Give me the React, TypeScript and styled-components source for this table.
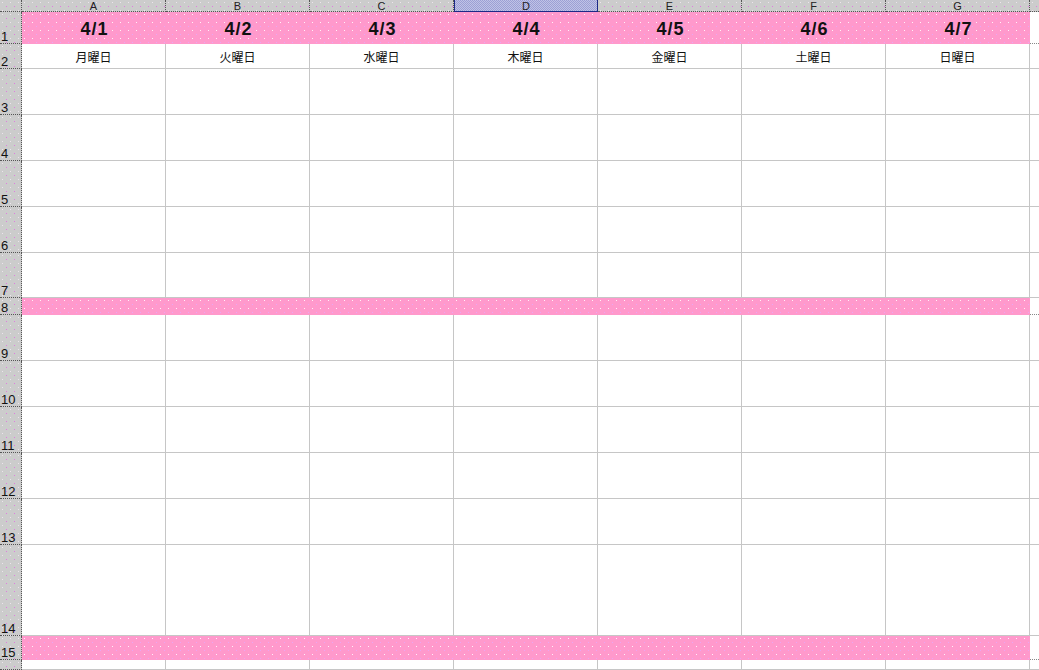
import styled, { createGlobalStyle, css } from "styled-components";

const GlobalStyle = createGlobalStyle`
  html, body {
    margin: 0;
    padding: 0;
    background: #fff;
    overflow: hidden;
  }
  * {
    box-sizing: border-box;
  }
`;

const COLUMNS = ["A", "B", "C", "D", "E", "F", "G"];
const DATES = ["4/1", "4/2", "4/3", "4/4", "4/5", "4/6", "4/7"];
const DAYS = ["月曜日", "火曜日", "水曜日", "木曜日", "金曜日", "土曜日", "日曜日"];

// row number, height (incl. bottom line), kind
const ROWS: { n: number; h: number; kind: "date" | "day" | "blank" | "band"; label?: boolean }[] = [
  { n: 1, h: 32, kind: "date" },
  { n: 2, h: 25, kind: "day" },
  { n: 3, h: 46, kind: "blank" },
  { n: 4, h: 46, kind: "blank" },
  { n: 5, h: 46, kind: "blank" },
  { n: 6, h: 46, kind: "blank" },
  { n: 7, h: 45, kind: "blank" },
  { n: 8, h: 17, kind: "band" },
  { n: 9, h: 46, kind: "blank" },
  { n: 10, h: 46, kind: "blank" },
  { n: 11, h: 46, kind: "blank" },
  { n: 12, h: 46, kind: "blank" },
  { n: 13, h: 46, kind: "blank" },
  { n: 14, h: 91, kind: "blank" },
  { n: 15, h: 24, kind: "band" },
  { n: 16, h: 10, kind: "blank", label: false },
];

const dot = (color: string) =>
  `radial-gradient(circle at 0.5px 0.5px, ${color} 0.6px, transparent 0.65px)`;

const pinkDots = css`
  background-color: #ff99cc;
  background-image: ${dot("#fff0f8")}, ${dot("#e9a6f2")};
  background-size: 8px 8px, 8px 8px;
  background-position: 2px 2px, 6px 6px;
`;

const grayDots = css`
  background-color: #cccccc;
  background-image: ${dot("#ece4ec")}, ${dot("#e07ce0")};
  background-size: 8px 8px, 8px 8px;
  background-position: 2px 2px, 6px 6px;
`;

export default function App() {
  return (
    <>
      <GlobalStyle />
      <Sheet $rows={ROWS.map((r) => r.h)}>
        <Corner />
        {COLUMNS.map((c) => (
          <ColHeader key={c} $selected={c === "D"}>
            {c}
          </ColHeader>
        ))}
        <ColFiller />

        {ROWS.map((r) => (
          <Row key={r.n} r={r} />
        ))}
      </Sheet>
    </>
  );
}

function Row({ r }: { r: (typeof ROWS)[number] }) {
  const pink = r.kind === "date" || r.kind === "band";
  return (
    <>
      <RowHeader>{r.label === false ? null : r.n}</RowHeader>
      {COLUMNS.map((c, i) =>
        pink ? (
          <PinkCell key={c}>{r.kind === "date" ? DATES[i] : null}</PinkCell>
        ) : (
          <Cell key={c}>{r.kind === "day" ? DAYS[i] : null}</Cell>
        )
      )}
      <Filler $pink={pink} />
    </>
  );
}

const Sheet = styled.div<{ $rows: number[] }>`
  display: grid;
  grid-template-columns: 22px repeat(7, 144px) 1fr;
  grid-template-rows: 12px ${(p) => p.$rows.map((h) => `${h}px`).join(" ")};
  width: 1039px;
  height: 670px;
  overflow: hidden;
`;

const Corner = styled.div`
  ${grayDots};
  border-right: 1px dotted #555;
  border-bottom: 1px dotted #555;
`;

const ColHeader = styled.div<{ $selected?: boolean }>`
  ${grayDots};
  border-right: 1px dotted #555;
  border-bottom: 1px dotted #555;
  display: flex;
  align-items: center;
  justify-content: center;
  font-family: "Liberation Sans", Arial, sans-serif;
  font-size: 11px;
  line-height: 1;
  color: #222;
  padding-top: 1px;
  ${(p) =>
    p.$selected &&
    css`
      background-color: #aeb2dc;
      background-image: repeating-conic-gradient(#9ca0d4 0 25%, #c0c3e6 0 50%);
      background-size: 2px 2px;
      background-position: 0 0;
      border: 1px solid #1c2a86;
      border-top: none;
    `}
`;

const ColFiller = styled.div`
  ${grayDots};
  border-bottom: 1px dotted #555;
`;

const RowHeader = styled.div`
  ${grayDots};
  border-right: 1px dotted #555;
  border-bottom: 1px dotted #555;
  display: flex;
  align-items: flex-end;
  font-family: "Liberation Sans", Arial, sans-serif;
  font-size: 13px;
  line-height: 1;
  color: #111;
  padding-left: 1px;
  overflow: hidden;
`;

const Cell = styled.div`
  border-right: 1px solid #c6c6c6;
  border-bottom: 1px solid #c6c6c6;
  display: flex;
  align-items: center;
  justify-content: center;
  font-family: "Noto Sans CJK JP", "Liberation Sans", sans-serif;
  font-size: 12px;
  line-height: 1;
  color: #111;
  padding-top: 1px;
`;

const PinkCell = styled.div`
  ${pinkDots};
  display: flex;
  align-items: center;
  justify-content: center;
  font-family: "Liberation Sans", Arial, sans-serif;
  font-weight: bold;
  font-size: 18px;
  letter-spacing: 1px;
  line-height: 1;
  color: #111;
  padding-left: 1px;
  padding-top: 2px;
`;

const Filler = styled.div<{ $pink?: boolean }>`
  border-bottom: ${(p) => (p.$pink ? "1px dotted #888" : "1px solid #c6c6c6")};
`;
